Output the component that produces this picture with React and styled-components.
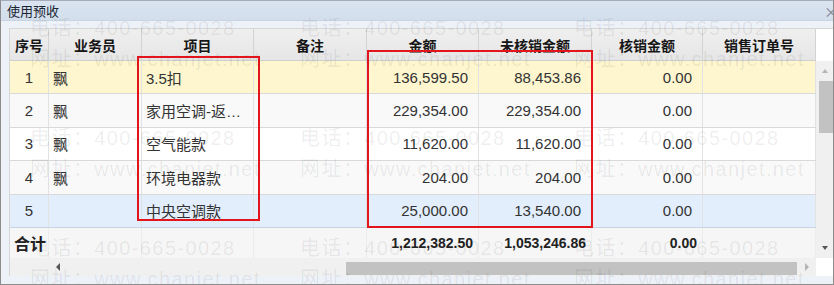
import React from 'react';
import styled, { createGlobalStyle, css } from 'styled-components';

const GlobalStyle = createGlobalStyle`
  body {
    margin: 0;
    background: #ffffff;
    font-family: "Liberation Sans", "Noto Sans CJK SC", sans-serif;
  }
`;

const COLS = '39px 93px 112px 113px 112px 113px 111px 113px';

const Window = styled.div`
  position: relative;
  width: 834px;
  height: 285px;
  box-sizing: border-box;
  border: 1px solid #8c8c8c;
  border-top-color: #a3acb8;
  background: #edf2f9;
  overflow: hidden;
`;

const TitleBar = styled.div`
  display: flex;
  justify-content: space-between;
  align-items: center;
  height: 20px;
  padding-left: 6px;
  background: linear-gradient(#dae4f1, #d3deec);
  border-bottom: 1px solid #c9d4e3;
  box-sizing: border-box;
  font-size: 13px;
  color: #1b2633;
  font-family: "Noto Sans CJK SC", sans-serif;
`;

const Close = styled.span`
  margin-right: -5px;
  font-size: 14px;
  color: #7d8794;
`;

const Body = styled.div`
  padding: 7px 0 0 8px;
`;

const Grid = styled.div`
  display: flex;
  flex-direction: column;
  border-left: 1px solid #d6d6d6;
  width: 823px;
`;

const HeaderRow = styled.div`
  display: grid;
  grid-template-columns: ${COLS} 17px;
  height: 33px;
  box-sizing: border-box;
  border-top: 1px solid #d6d6d6;
  background: #ffffff;
`;

const HeadCell = styled.div`
  display: flex;
  align-items: center;
  justify-content: center;
  background: linear-gradient(#efefef, #e6e6e6);
  border-right: 1px solid #d3d3d3;
  border-bottom: 1px solid #cfcfcf;
  font-family: "Noto Sans CJK SC", sans-serif;
  font-weight: 700;
  font-size: 14px;
  color: #161616;
`;

const Middle = styled.div`
  display: flex;
  height: 197px;
`;

const Rows = styled.div`
  display: flex;
  flex-direction: column;
  width: 806px;
`;

const tones = {
  yellow: '#fdf6cf',
  alt: '#f9f9f9',
  plain: '#ffffff',
  selected: '#e2eefc',
};

const Row = styled.div`
  display: grid;
  grid-template-columns: ${COLS};
  height: 33.4px;
  box-sizing: border-box;
  background: ${p => tones[p.$tone]};
  border-bottom: 1px solid ${p => (p.$tone === 'selected' ? '#c6d4e6' : '#d9d9d9')};
`;

const Cell = styled.div`
  display: flex;
  align-items: center;
  justify-content: ${p => (p.$align === 'right' ? 'flex-end' : p.$align === 'center' ? 'center' : 'flex-start')};
  padding: ${p => (p.$align === 'right' ? '0 10px 0 4px' : '0 4px')};
  border-right: 1px solid #e2e2e2;
  font-size: 15px;
  color: #333333;
  white-space: nowrap;
  overflow: hidden;
`;

const TotalRow = styled.div`
  display: grid;
  grid-template-columns: ${COLS};
  flex: 1;
  background: #f6f6f6;
`;

const TotalCell = styled.div`
  display: flex;
  align-items: center;
  justify-content: ${p => (p.$right ? 'flex-end' : 'flex-start')};
  padding: ${p => (p.$right ? '0 5px 0 0' : '0 0 0 4px')};
  border-right: 1px solid #ececec;
  font-weight: 700;
  font-size: ${p => (p.$label ? '16px' : '14px')};
  font-family: ${p => (p.$label ? '"Noto Sans CJK SC", sans-serif' : '"Liberation Sans", sans-serif')};
  color: #222222;
  white-space: nowrap;
`;

const VScroll = styled.div`
  display: flex;
  flex-direction: column;
  width: 17px;
  background: #f0f0f0;
`;

const ArrowBox = styled.div`
  display: flex;
  align-items: center;
  justify-content: center;
  width: ${p => p.$w || '17px'};
  height: ${p => p.$h || '20px'};
  flex-shrink: 0;
`;

const arrowShapes = {
  up: css`border-width: 0 3.5px 4px 3.5px; border-color: transparent transparent var(--c) transparent;`,
  down: css`border-width: 4px 3.5px 0 3.5px; border-color: var(--c) transparent transparent transparent;`,
  left: css`border-width: 4px 4px 4px 0; border-color: transparent var(--c) transparent transparent;`,
  right: css`border-width: 4px 0 4px 4px; border-color: transparent transparent transparent var(--c);`,
};

const Arrow = styled.span`
  --c: ${p => (p.$dim ? '#b4b4b4' : '#555555')};
  width: 0;
  height: 0;
  border-style: solid;
  ${p => arrowShapes[p.$dir]}
`;

const VTrack = styled.div`
  flex: 1;
  display: flex;
  flex-direction: column;
  padding-left: 3px;
`;

const VThumb = styled.div`
  height: 52px;
  background: #c2c2c2;
`;

const HScroll = styled.div`
  display: flex;
  height: 18px;
  background: #f0f0f0;
`;

const Frozen = styled.div`
  width: 39px;
`;

const HTrack = styled.div`
  flex: 1;
  display: flex;
  justify-content: flex-end;
  padding-top: 4px;
  padding-bottom: 1px;
`;

const HThumb = styled.div`
  width: ${p => p.$w}px;
  background: #c2c2c2;
`;

const Corner = styled.div`
  width: 17px;
  background: #ffffff;
`;

const Watermark = styled.span`
  position: absolute;
  font-family: "Liberation Sans", "Noto Sans CJK SC", sans-serif;
  font-size: 20px;
  line-height: 1;
  letter-spacing: 1.4px;
  color: rgba(0, 0, 0, 0.075);
  white-space: nowrap;
  pointer-events: none;
`;

const Mark = styled.div`
  position: absolute;
  box-sizing: border-box;
  border: 2px solid #e3141c;
  pointer-events: none;
`;

const headers = ['序号', '业务员', '项目', '备注', '金额', '未核销金额', '核销金额', '销售订单号'];

const rows = [
  { no: 1, staff: '飘', item: '3.5扣', amount: '136,599.50', open: '88,453.86', done: '0.00', tone: 'yellow' },
  { no: 2, staff: '飘', item: '家用空调-返…', amount: '229,354.00', open: '229,354.00', done: '0.00', tone: 'alt' },
  { no: 3, staff: '飘', item: '空气能款', amount: '11,620.00', open: '11,620.00', done: '0.00', tone: 'plain' },
  { no: 4, staff: '飘', item: '环境电器款', amount: '204.00', open: '204.00', done: '0.00', tone: 'alt' },
  { no: 5, staff: '', item: '中央空调款', amount: '25,000.00', open: '13,540.00', done: '0.00', tone: 'selected' },
];

const marks = [];
[29, 299, 573].forEach(x => {
  [17, 127, 237].forEach(y => {
    marks.push({ x, y, text: '电话：400-665-0028' });
    marks.push({ x, y: y + 31, text: '网址：www.chanjet.net' });
  });
});

export default function App() {
  return (
    <>
      <GlobalStyle />
      <Window>
        <TitleBar>
          <span>使用预收</span>
          <Close>×</Close>
        </TitleBar>
        <Body>
          <Grid>
            <HeaderRow>
              {headers.map(h => (
                <HeadCell key={h}>{h}</HeadCell>
              ))}
              <div />
            </HeaderRow>
            <Middle>
              <Rows>
                {rows.map(r => (
                  <Row key={r.no} $tone={r.tone}>
                    <Cell $align="center">{r.no}</Cell>
                    <Cell>{r.staff}</Cell>
                    <Cell>{r.item}</Cell>
                    <Cell />
                    <Cell $align="right">{r.amount}</Cell>
                    <Cell $align="right">{r.open}</Cell>
                    <Cell $align="right">{r.done}</Cell>
                    <Cell />
                  </Row>
                ))}
                <TotalRow>
                  <TotalCell $label>合计</TotalCell>
                  <TotalCell />
                  <TotalCell />
                  <TotalCell />
                  <TotalCell $right>1,212,382.50</TotalCell>
                  <TotalCell $right>1,053,246.86</TotalCell>
                  <TotalCell $right>0.00</TotalCell>
                  <TotalCell />
                </TotalRow>
              </Rows>
              <VScroll>
                <ArrowBox>
                  <Arrow $dir="up" $dim />
                </ArrowBox>
                <VTrack>
                  <VThumb />
                </VTrack>
                <ArrowBox>
                  <Arrow $dir="down" />
                </ArrowBox>
              </VScroll>
            </Middle>
            <HScroll>
              <Frozen />
              <ArrowBox $w="18px" $h="18px">
                <Arrow $dir="left" />
              </ArrowBox>
              <HTrack>
                <HThumb $w={451} />
              </HTrack>
              <ArrowBox $w="19px" $h="18px">
                <Arrow $dir="right" $dim />
              </ArrowBox>
              <Corner />
            </HScroll>
          </Grid>
        </Body>
        {marks.map((m, i) => (
          <Watermark key={i} style={{ left: m.x, top: m.y }}>
            {m.text}
          </Watermark>
        ))}
        <Mark style={{ left: 136, top: 55, width: 123, height: 165 }} />
        <Mark style={{ left: 366, top: 49, width: 226, height: 178 }} />
      </Window>
    </>
  );
}
